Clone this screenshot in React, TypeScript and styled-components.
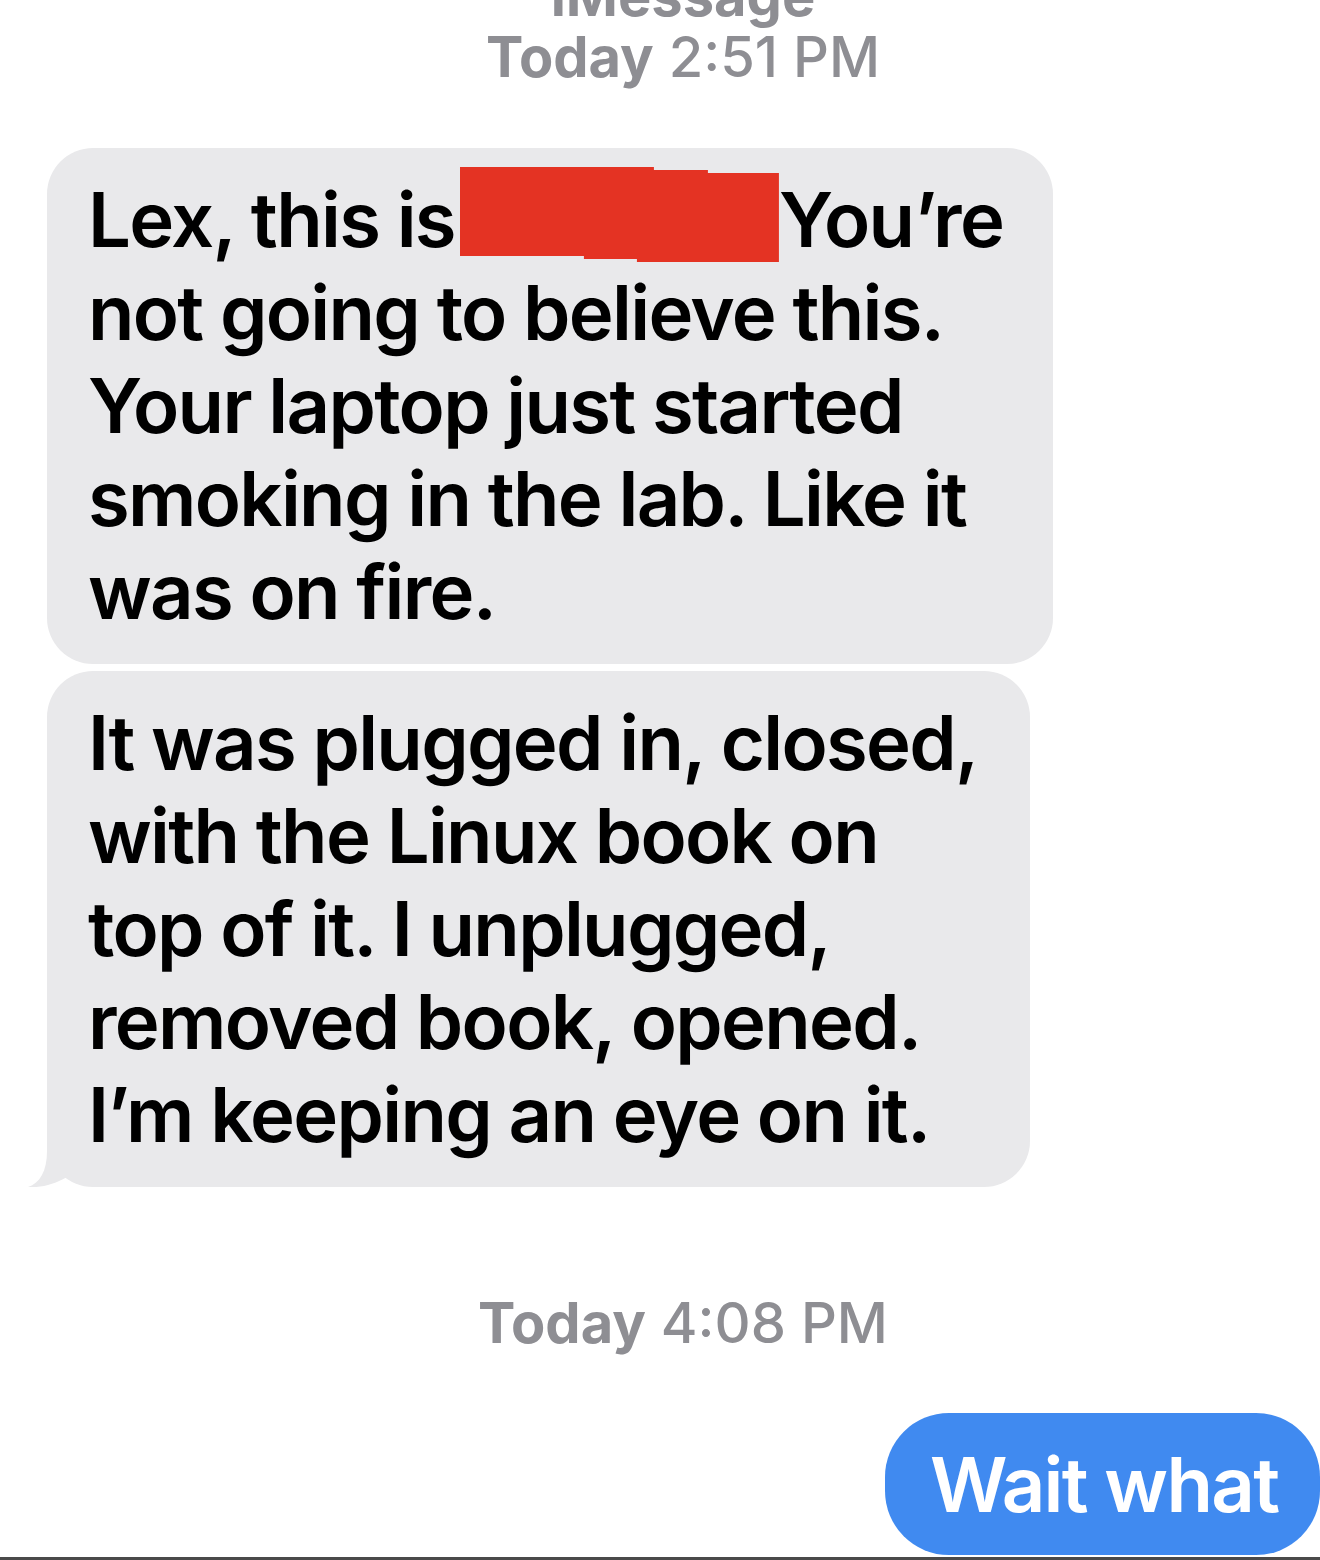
import React from "react";
import styled, { createGlobalStyle } from "styled-components";

const GlobalStyle = createGlobalStyle`
  html, body {
    margin: 0;
    padding: 0;
    background: #ffffff;
  }
  body {
    font-family: Inter, "Noto Sans", "Liberation Sans", sans-serif;
    -webkit-font-smoothing: antialiased;
  }
`;

const Screen = styled.div`
  position: relative;
  width: 1320px;
  height: 1560px;
  overflow: hidden;
  display: flex;
  flex-direction: column;
  background: #ffffff;
`;

const Header = styled.div`
  margin-top: -34px;
  padding-left: 46px;
  display: flex;
  flex-direction: column;
  align-items: center;
  font-size: 56px;
  line-height: 61px;
  color: #8e8e93;
  font-weight: 500;
  white-space: nowrap;

  b {
    font-weight: 700;
  }
`;

const Service = styled.div`
  font-weight: 700;
`;

const Stamp = styled.div`
  margin-top: 102px;
  padding-left: 46px;
  text-align: center;
  font-size: 56px;
  line-height: 68px;
  color: #8e8e93;
  font-weight: 500;
  white-space: nowrap;

  b {
    font-weight: 700;
  }
`;

const Thread = styled.div`
  display: flex;
  flex-direction: column;
  gap: 7px;
  margin-top: 60px;
  padding-left: 47px;
`;

const Bubble = styled.div<{ $width: number }>`
  position: relative;
  box-sizing: border-box;
  width: ${(p) => p.$width}px;
  padding: 25px 0 26px 41px;
  border-radius: 46px;
  background: #e9e9eb;
  color: #000000;
  font-size: 76px;
  font-weight: 600;
  line-height: 93px;
  letter-spacing: -1.7px;
`;

const Line = styled.div`
  white-space: nowrap;
`;

const Redacted = styled.span`
  display: inline-block;
  width: 319px;
  height: 95px;
  margin: -12px 0 0 5px;
  vertical-align: -15px;
  background: #e43323;
  clip-path: polygon(
    0 0, 194px 0, 194px 3px, 248px 3px, 248px 6px, 319px 6px,
    319px 95px, 177px 95px, 177px 92px, 124px 92px, 124px 89px, 0 89px
  );
`;

const Tail = styled.svg`
  position: absolute;
  left: -19px;
  bottom: 0;
  width: 50px;
  height: 50px;
`;

const Outgoing = styled.div`
  align-self: flex-end;
  box-sizing: border-box;
  width: 435px;
  margin-top: 56px;
  padding: 25px 0 24px 45px;
  border-radius: 64px;
  background: #408af0;
  color: #ffffff;
  font-size: 76px;
  font-weight: 600;
  line-height: 93px;
  letter-spacing: -1.7px;
  white-space: nowrap;
`;

const BottomRule = styled.div`
  margin-top: 2px;
  height: 3px;
  background: #4a4a4a;
`;

const first = [
  "not going to believe this.",
  "Your laptop just started",
  "smoking in the lab. Like it",
  "was on fire.",
];

const second = [
  "It was plugged in, closed,",
  "with the Linux book on",
  "top of it. I unplugged,",
  "removed book, opened.",
  "I\u2019m keeping an eye on it.",
];

export default function App() {
  return (
    <Screen>
      <GlobalStyle />
      <Header>
        <Service>iMessage</Service>
        <div>
          <b>Today</b> 2:51 PM
        </div>
      </Header>

      <Thread>
        <Bubble $width={1006}>
          <Line>
            Lex, this is<Redacted />
            You’re
          </Line>
          {first.map((t) => (
            <Line key={t}>{t}</Line>
          ))}
        </Bubble>
        <Bubble $width={983}>
          {second.map((t) => (
            <Line key={t}>{t}</Line>
          ))}
          <Tail viewBox="-19 -50 50 50">
            <path
              d="M0 -50 L0 -36 C0 -16 -7 -4 -19 0 C-6 1 8 -3 20 -10 L31 -10 L31 -50 Z"
              fill="#e9e9eb"
            />
          </Tail>
        </Bubble>
      </Thread>

      <Stamp>
        <b>Today</b> 4:08 PM
      </Stamp>

      <Outgoing>Wait what</Outgoing>
      <BottomRule />
    </Screen>
  );
}
